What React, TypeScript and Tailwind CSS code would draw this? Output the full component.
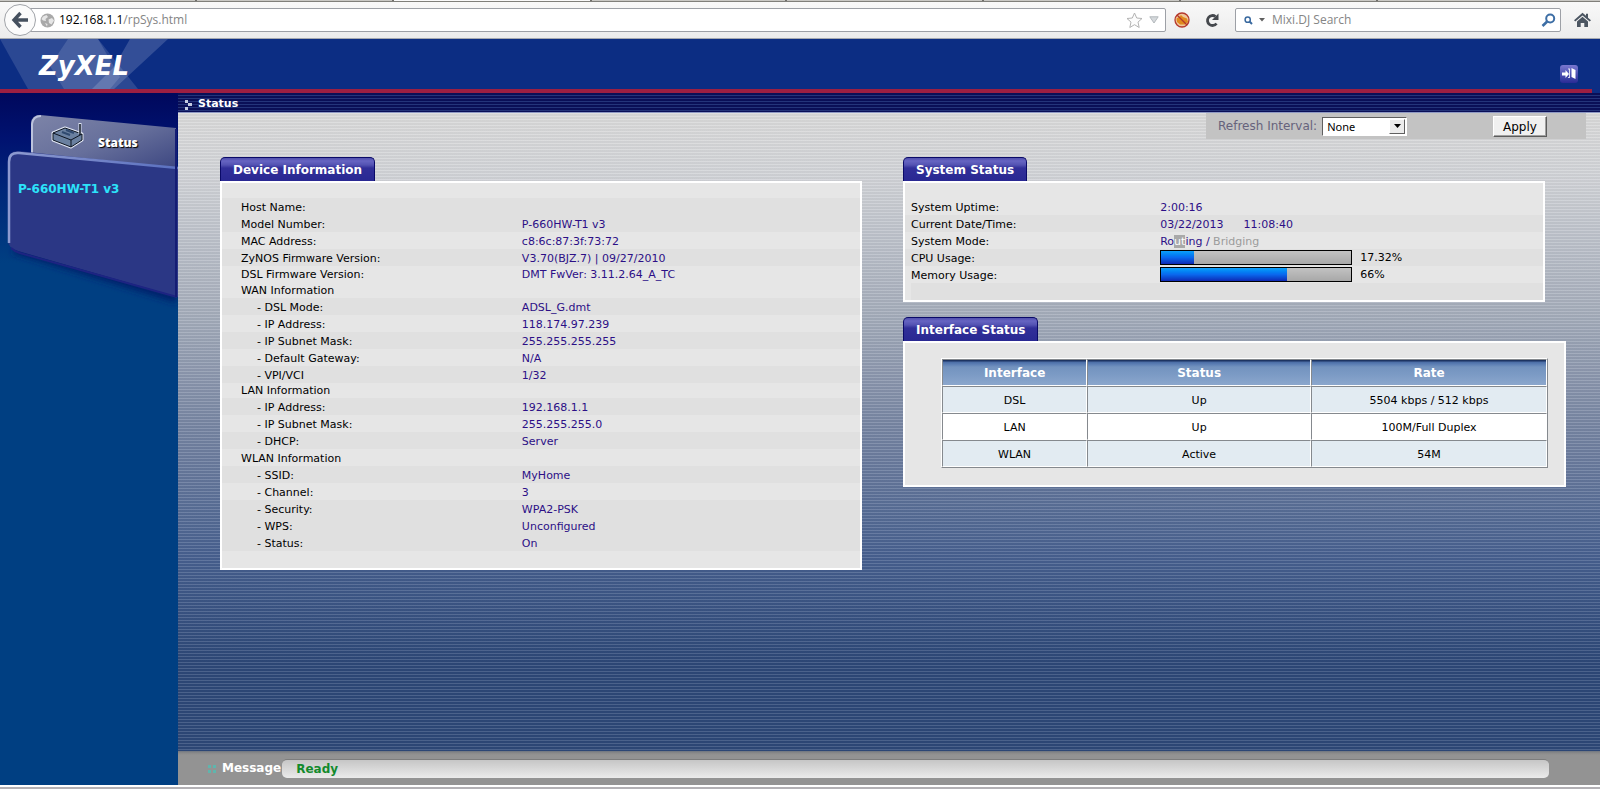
import { ReactNode, useState } from "react";

type Row = { label: string; value?: string; sub?: boolean; size?: string; dark?: boolean };

const deviceRows: Row[] = [
  { label: "Host Name:", dark: true },
  { label: "Model Number:", value: "P-660HW-T1 v3", dark: true },
  { label: "MAC Address:", value: "c8:6c:87:3f:73:72" },
  { label: "ZyNOS Firmware Version:", value: "V3.70(BJZ.7) | 09/27/2010", dark: true },
  { label: "DSL Firmware Version:", value: "DMT FwVer: 3.11.2.64_A_TC", size: "pt-[1px]" },
  { label: "WAN Information", size: "pt-[1px]" },
  { label: "- DSL Mode:", value: "ADSL_G.dmt", sub: true, dark: true },
  { label: "- IP Address:", value: "118.174.97.239", sub: true },
  { label: "- IP Subnet Mask:", value: "255.255.255.255", sub: true, dark: true },
  { label: "- Default Gateway:", value: "N/A", sub: true },
  { label: "- VPI/VCI", value: "1/32", sub: true, dark: true },
  { label: "LAN Information", size: "pt-0" },
  { label: "- IP Address:", value: "192.168.1.1", sub: true, dark: true },
  { label: "- IP Subnet Mask:", value: "255.255.255.0", sub: true },
  { label: "- DHCP:", value: "Server", sub: true, dark: true },
  { label: "WLAN Information" },
  { label: "- SSID:", value: "MyHome", sub: true, dark: true },
  { label: "- Channel:", value: "3", sub: true },
  { label: "- Security:", value: "WPA2-PSK", sub: true, dark: true },
  { label: "- WPS:", value: "Unconfigured", sub: true, dark: true },
  { label: "- Status:", value: "On", sub: true, dark: true },
];

const interfaces = [
  { name: "DSL", status: "Up", rate: "5504 kbps / 512 kbps" },
  { name: "LAN", status: "Up", rate: "100M/Full Duplex" },
  { name: "WLAN", status: "Active", rate: "54M" },
];

function BrowserBar() {
  return (
    <div className="shrink-0 bg-gradient-to-b from-[#f9f9f9] to-[#ececec] border-b border-[#a5a9b0] font-['Open_Sans','Noto_Sans',sans-serif]">
      <div className="flex h-[2px] bg-[#c9c8c4] border-b border-[#807f7a]">
        <div className="w-[12.3%] border-r-2 border-[#6f6e6a]" />
        <div className="w-[12.3%] border-r-2 border-[#6f6e6a]" />
        <div className="w-[12.3%] bg-[#f9f9f9]" />
        <div className="w-[12.3%] border-x-2 border-[#6f6e6a]" />
        <div className="w-[12.3%] border-r-2 border-[#6f6e6a]" />
        <div className="w-[12.3%] border-r-2 border-[#6f6e6a]" />
        <div className="w-[12.3%] border-r-2 border-[#6f6e6a]" />
      </div>
      <div className="flex items-center h-[36px] pl-1 pr-[9px]">
        <button aria-label="Back" className="relative z-10 size-[32px] shrink-0 rounded-full border border-[#a0a3a8] bg-[#fbfbfb] flex items-center justify-center">
          <svg width="18" height="18" viewBox="0 0 18 18" fill="none" stroke="#45505e" strokeWidth="3.4">
            <path d="M9.500 2 3 9l6.500 7M3.500 9H17" />
          </svg>
        </button>
        <div className="flex-1 -ml-[6px] h-[24px] flex items-center border border-[#9da0a6] rounded-r-[2px] bg-white pl-[9px] pr-[6px]">
          <svg width="15" height="15" viewBox="0 0 15 15" className="shrink-0">
            <circle cx="7.500" cy="7.500" r="7" fill="#a9a9a9" />
            <path d="M3 3.500 6.500 2 8 4 5.500 6 6 8 3 7.500 1.500 6ZM8.500 6.500 12 5l2 2.500-2.500 4L9 10ZM5 10l2.500 1L7 13.500Z" fill="#e6e6e6" />
          </svg>
          <div className="ml-[4px] flex-1 text-[12px] leading-[20px] text-black">
            192.168.1.1<span className="text-[#858585]">/rpSys.html</span>
          </div>
          <svg width="17" height="17" viewBox="0 0 17 17" fill="#fcfcfc" stroke="#b3b3b3">
            <path d="m8.500 1 2.200 5 5.300.5-4 3.600 1.200 5.400-4.700-2.800-4.700 2.800L5 10.100 1 6.500 6.300 6Z" />
          </svg>
          <svg width="10" height="8" viewBox="0 0 10 8" className="ml-[6px]" fill="#d5d9dc" stroke="#b3b8bc">
            <path d="M.8.8h8.400L5 7Z" />
          </svg>
        </div>
        <svg width="16" height="16" viewBox="0 0 16 16" className="ml-[8px]">
          <circle cx="8" cy="8" r="7" fill="#f0c79c" />
          <path d="M2.500 6.500 5 5l2-2 2 2 4 1.500 1 3.500-3 2.500H6L3 10Z" fill="#e08a1e" />
          <circle cx="8" cy="8" r="7" fill="none" stroke="#b5382c" strokeWidth="1.300" />
          <path d="m3 3 10 10" stroke="#b5382c" strokeWidth="1.300" />
        </svg>
        <svg width="15" height="15" viewBox="0 0 15 15" className="ml-[15px]">
          <path d="M11.500 10.500A5 5 0 1 1 10.500 3.500" fill="none" stroke="#45484d" strokeWidth="2.800" />
          <path d="M13.500.5v6.500H7Z" fill="#45484d" />
        </svg>
        <form className="ml-[15px] w-[326px] h-[24px] flex items-center border border-[#9da0a6] rounded-[2px] bg-white pl-[8px] pr-[4px]">
          <svg width="9" height="9" viewBox="0 0 9 9" fill="none" stroke="#39699f" strokeWidth="1.500">
            <circle cx="3.700" cy="3.700" r="2.600" />
            <path d="m5.500 5.500 2.500 2.500" strokeWidth="2" />
          </svg>
          <svg width="6" height="4" viewBox="0 0 6 4" className="ml-[6px]" fill="#606060">
            <path d="M0 0h6L3 3.500Z" />
          </svg>
          <input
            aria-label="Search"
            placeholder="Mixi.DJ Search"
            className="ml-[7px] flex-1 min-w-0 text-[12px] leading-[20px] outline-none placeholder:text-[#858585] placeholder:opacity-100"
          />
          <svg width="15" height="15" viewBox="0 0 15 15" fill="none" stroke="#3d6ea5">
            <circle cx="9.200" cy="5.500" r="4" strokeWidth="2" />
            <path d="M6.200 8.500 1.500 13" strokeWidth="2.600" />
          </svg>
        </form>
        <svg width="17" height="16" viewBox="0 0 17 16" className="ml-[13px]" fill="#4b5561">
          <path d="M8.500.8 0 8.300l1.300 1.300 7.200-6.200 7.200 6.200L17 8.300l-3-2.600V1.800h-2v2Z" />
          <path d="M3 9.500 8.500 4.800 14 9.500V15h-3.700v-4H6.700v4H3Z" />
        </svg>
      </div>
    </div>
  );
}

function Header() {
  return (
    <header className="shrink-0 bg-[#0c2d83]">
      <div className="relative h-[50px] flex items-start justify-between overflow-hidden">
        <svg width="170" height="50" viewBox="0 0 170 50" className="absolute left-0 top-0" fill="#fff">
          <path d="M0 0h98l40 50H28Z" opacity=".13" />
          <path d="M68 0h30l22 38-10 12H64L50 27Z" opacity=".13" />
          <path d="M130 0h38l-54 50H92l22-22Z" opacity=".16" />
        </svg>
        <div className="relative ml-[39px] mt-[11px] text-[26px] leading-[32px] font-bold italic text-white">ZyXEL</div>
        <button aria-label="Logout" className="relative mt-[26px] mr-[22px] size-[18px] rounded-[3px] bg-gradient-to-b from-[#7a78d0] to-[#2a2a96]">
          <svg width="18" height="18" viewBox="0 0 18 18" fill="#fff">
            <path d="M2 7.500h3.500V5L9 9l-3.500 4v-2.500H2Z" />
            <path d="m11.500 3 4 2v9l-4-2Z" />
            <path d="M8 3.500h2v9.500H8v-1h1v-7.500H8Z" opacity=".8" />
          </svg>
        </button>
      </div>
      <div className="h-[4px] mr-[8px] bg-[#9c1f42]" />
    </header>
  );
}

function Sidebar() {
  return (
    <nav className="w-[178px] shrink-0 bg-[#003f82] bg-[linear-gradient(#00085c_0px,#001270_45px,#00287a_100px,#003f82_170px)]">
      <div className="relative h-[220px]">
        <svg width="178" height="220" viewBox="0 0 178 220" className="absolute inset-0">
          <defs>
            <linearGradient id="back" x1="0" y1="0" x2="1" y2="1">
              <stop offset="0" stopColor="#7d84a8" />
              <stop offset=".5" stopColor="#666f9b" />
              <stop offset="1" stopColor="#39437f" />
            </linearGradient>
            <linearGradient id="edge" x1="0" y1="0" x2="1" y2="0">
              <stop offset="0" stopColor="#8d9ad0" />
              <stop offset="1" stopColor="#5a70c0" />
            </linearGradient>
            <filter id="soft"><feGaussianBlur stdDeviation="3" /></filter>
          </defs>
          <path d="M12 160 176 210 178 196 20 150Z" fill="#00246c" filter="url(#soft)" />
          <path d="M31 68V30q1-8 9-8l136 13v45Z" fill="url(#back)" />
          <path d="M32 66V31q1-8 9-8" fill="none" stroke="#bcc3dd" strokeWidth="2" />
          <path d="M8 152V68q0-10 10-10l160 17v129L18 158q-10-3-10-10Z" fill="#2b3785" />
          <path d="M9 150V69q0-10 10-9l159 15" fill="none" stroke="url(#edge)" strokeWidth="2.500" />
          <path d="M11 155q3 3 9 5l157 44" fill="none" stroke="#1d2482" strokeWidth="2" />
          <path d="M176 36v168" stroke="#151d74" strokeWidth="2" />
          <g transform="translate(52 30)" strokeLinejoin="round">
            <path d="M1 10 13 5l17 6v6l-11 7L1 17Z" fill="#50678a" stroke="#dfe5f2" strokeWidth="3" />
            <path d="M1 10 13 5l17 6v6l-11 7L1 17Z" fill="#6a80a0" stroke="#0d1420" />
            <path d="m1 10 18 7 11-6M19 17v7" fill="none" stroke="#0d1420" />
            <path d="m10 9 8 3M14 7l8 3" stroke="#304a70" strokeWidth="2" />
            <path d="M28 11V0" stroke="#dfe5f2" strokeWidth="3" />
            <path d="M28 12V1" stroke="#0d1420" strokeWidth="1.500" />
          </g>
        </svg>
        <a href="#status" className="relative block pt-[42px] pl-[98px] text-[12px] leading-[16px] font-extrabold text-white font-['Open_Sans',sans-serif] [text-shadow:1px_1px_1px_#000]">
          Status
        </a>
        <div className="relative pt-[30px] pl-[18px] text-[12px] leading-[16px] font-bold text-[#2ce3fa]">P-660HW-T1 v3</div>
      </div>
    </nav>
  );
}

function Panel({ title, className = "", children }: { title: string; className?: string; children: ReactNode }) {
  return (
    <section className={className}>
      <h2 className="w-fit h-[24px] px-[12px] pt-[5px] rounded-t-[5px] border border-b-0 border-[#0a0a68] bg-[linear-gradient(#5150ae_0px,#6664c2_3px,#5352b2_7px,#312f99_10px,#292892_100%)] text-[12px] leading-[15px] font-bold text-white whitespace-nowrap">
        {title}
      </h2>
      <div className="border-2 border-white bg-[#e6e6e6]">{children}</div>
    </section>
  );
}

function UsageBar({ label, pct }: { label: string; pct: number }) {
  return (
    <div className="flex items-center">
      <div
        role="progressbar"
        aria-label={label}
        aria-valuenow={pct}
        className="w-[192px] h-[15px] border border-black bg-gradient-to-b from-[#c2c2c2] to-[#a8a8a8]"
      >
        <div className="h-full bg-gradient-to-b from-[#0fa0fa] via-[#0a68ee] to-[#1028b4]" style={{ width: `${pct}%` }} />
      </div>
      <span className="ml-[8px] text-black">{pct}%</span>
    </div>
  );
}

function DeviceInformation() {
  return (
    <Panel title="Device Information">
      <table className="w-full mt-[15px] mb-[17px] text-left">
        <tbody>
          {deviceRows.map((r, i) => (
            <tr key={i} className={r.dark ? "bg-[#e0e0e0]" : ""}>
              <th className={`w-[47%] font-normal leading-[15px] ${r.size ?? "pt-[2px]"} ${r.sub ? "pl-[35px]" : "pl-[19px]"}`}>{r.label}</th>
              <td className={`leading-[15px] text-[#2c0f86] ${r.size ?? "pt-[2px]"}`}>{r.value}</td>
            </tr>
          ))}
        </tbody>
      </table>
    </Panel>
  );
}

function SystemStatus() {
  const th = "w-[40%] pt-[2px] pl-[6px] font-normal leading-[15px]";
  const td = "pt-[2px] leading-[15px] text-[#2c0f86]";
  return (
    <Panel title="System Status" className="mr-[21px]">
      <table className="w-full mt-[15px] text-left">
        <tbody>
          <tr>
            <th className={th}>System Uptime:</th>
            <td className={td}>2:00:16</td>
          </tr>
          <tr className="bg-[#e0e0e0]">
            <th className={th}>Current Date/Time:</th>
            <td className={td}>
              <span className="mr-[20px]">03/22/2013</span>
              <span>11:08:40</span>
            </td>
          </tr>
          <tr>
            <th className={th}>System Mode:</th>
            <td className={td}>
              Ro<span className="bg-[#a9a9a9] text-white">ut</span>ing / <span className="text-[#9b9b9b]">Bridging</span>
            </td>
          </tr>
          <tr className="bg-[#e0e0e0]">
            <th className={th}>CPU Usage:</th>
            <td className="py-[1px]"><UsageBar label="CPU Usage" pct={17.32} /></td>
          </tr>
          <tr>
            <th className={th}>Memory Usage:</th>
            <td className="py-[1px]"><UsageBar label="Memory Usage" pct={66} /></td>
          </tr>
        </tbody>
      </table>
      <div className="h-[17px] ml-[6px] bg-[#e0e0e0]" />
    </Panel>
  );
}

function InterfaceStatus() {
  const cell = "h-[27px] pt-[2px] border border-t-[#85898e] border-l-[#85898e] border-b-white border-r-white";
  const head = `${cell} bg-[linear-gradient(#1d3462_0px,#1d3462_1px,#4a6ca5_2px,#5a7db3_4px,#7393bf_7px,#7c9bc5_60%,#8ba7cd_100%)] text-[12px] font-bold text-white`;
  return (
    <Panel title="Interface Status" className="mt-[15px]">
      <div className="pt-[15px] pb-[17px] pl-[36px] pr-[16px]">
        <table className="w-full border-separate border-spacing-0 border border-t-white border-l-white border-b-[#85898e] border-r-[#85898e] text-center">
          <thead>
            <tr>
              <th className={`${head} w-[24%]`}>Interface</th>
              <th className={`${head} w-[37%]`}>Status</th>
              <th className={head}>Rate</th>
            </tr>
          </thead>
          <tbody>
            {interfaces.map((f, i) => (
              <tr key={f.name} className={i % 2 ? "bg-white" : "bg-[#e2ebf2]"}>
                <td className={cell}>{f.name}</td>
                <td className={cell}>{f.status}</td>
                <td className={cell}>{f.rate}</td>
              </tr>
            ))}
          </tbody>
        </table>
      </div>
    </Panel>
  );
}

function Toolbar() {
  const [interval, setInterval] = useState("None");
  return (
    <div className="flex justify-end pr-[14px]">
      <div className="w-[380px] h-[26px] flex items-center pl-[12px] pr-[39px] bg-[#c3c3c3]">
        <label htmlFor="interval" className="text-[12px] text-[#66627c]">Refresh Interval:</label>
        <div className="relative ml-[5px]">
          <select
            id="interval"
            value={interval}
            onChange={(e) => setInterval(e.target.value)}
            className="block appearance-none w-[85px] h-[19px] pl-[4px] bg-white border border-t-[#606060] border-l-[#606060] border-b-white border-r-white text-[11px] leading-[15px] text-black font-['Noto_Sans',sans-serif]"
          >
            <option>None</option>
            <option>20 seconds</option>
            <option>60 seconds</option>
          </select>
          <span className="pointer-events-none absolute right-[2px] top-[2px] w-[16px] h-[15px] flex items-center justify-center bg-[#ececec] border border-t-white border-l-white border-b-[#606060] border-r-[#606060]">
            <svg width="7" height="4" viewBox="0 0 7 4"><path d="M0 0h7L3.500 4Z" /></svg>
          </span>
        </div>
        <button className="ml-auto mt-[1px] w-[54px] h-[21px] bg-[#f0f0f0] border border-t-white border-l-white border-b-[#5c5c5c] border-r-[#5c5c5c] shadow-[inset_-1px_-1px_0_#a0a0a0] text-[12px] leading-[16px] text-black">
          Apply
        </button>
      </div>
    </div>
  );
}

function MessageBar() {
  return (
    <footer className="shrink-0 h-[34px] flex items-center bg-[linear-gradient(#6f7680_0px,#8a8a8a_2px,#939393_4px)] pl-[30px] pr-[51px] text-[12px] font-bold">
      <svg width="8" height="8" viewBox="0 0 8 8" className="mt-[1px] shrink-0" fill="#5fb5ad">
        <path d="M0 0h3v3H0ZM5 0h3v3H5ZM0 5h3v3H0ZM5 5h3v3H5Z" />
      </svg>
      <span className="ml-[6px] mr-[1px] text-white">Message</span>
      <output className="flex-1 mt-[1px] h-[19px] pl-[14px] leading-[19px] rounded-[5px] border-t border-[#7d7d7d] bg-gradient-to-b from-[#c6c6c6] to-[#ebebeb] text-[#128a2c]">
        Ready
      </output>
    </footer>
  );
}

export default function App() {
  return (
    <div className="min-h-screen flex flex-col bg-[#b3b1b5] text-[11px] leading-[15px] text-black font-['DejaVu_Sans',Verdana,sans-serif]">
      <BrowserBar />
      <Header />
      <div className="flex-1 flex border-b-2 border-white">
        <Sidebar />
        <div className="flex-1 min-w-0 flex flex-col">
          <div className="h-[20px] flex items-center pl-[7px] border-b border-[#8f9ac4] bg-[repeating-linear-gradient(#0a0f57_0px,#0a0f57_2px,#24347a_2px,#24347a_3px)]">
            <svg width="7" height="10" viewBox="0 0 7 10" className="mt-[4px]" fill="#c3cbe0">
              <path d="M0 0h3v3H0ZM3 3h4v3H3ZM0 7h3v3H0Z" />
            </svg>
            <h1 className="ml-[6px] mt-[1px] text-[11px] leading-[15px] font-bold text-white">Status</h1>
          </div>
          <main className="flex-1 bg-[repeating-linear-gradient(#ffffff24_0px,#ffffff24_1px,#00000008_1px,#00000008_3px),linear-gradient(#dadada_0px,#d2d4d8_60px,#a5adbb_200px,#7886a3_310px,#486190_440px,#2d4878_550px,#2d4878_100%)]">
            <Toolbar />
            <div className="grid grid-cols-[642fr_663fr] items-start gap-[41px] pt-[18px] pl-[42px] pr-[34px]">
              <DeviceInformation />
              <div>
                <SystemStatus />
                <InterfaceStatus />
              </div>
            </div>
          </main>
          <MessageBar />
        </div>
      </div>
      <div className="h-[2px] shrink-0" />
    </div>
  );
}
